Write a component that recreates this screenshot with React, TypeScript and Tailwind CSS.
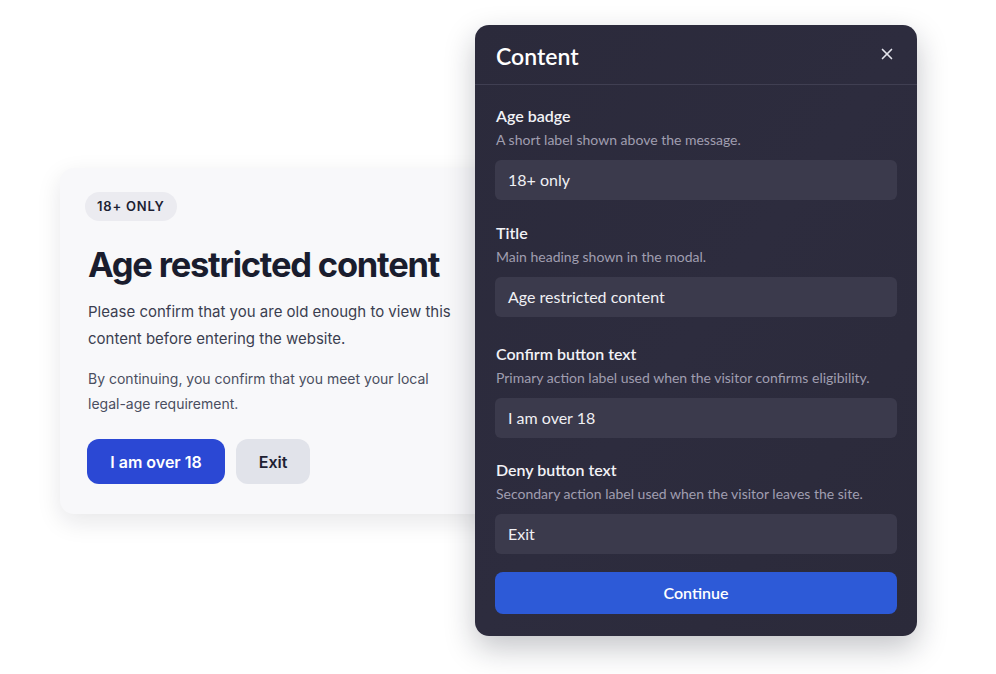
import { X } from 'lucide-react'

const fields = [
  { label: 'Age badge', hint: 'A short label shown above the message.', value: '18+ only', gap: 'mb-[23px]' },
  { label: 'Title', hint: 'Main heading shown in the modal.', value: 'Age restricted content', gap: 'mb-[27px]' },
  {
    label: 'Confirm button text',
    hint: 'Primary action label used when the visitor confirms eligibility.',
    value: 'I am over 18',
    gap: 'mb-[22px]',
  },
  {
    label: 'Deny button text',
    hint: 'Secondary action label used when the visitor leaves the site.',
    value: 'Exit',
    gap: 'mb-[18px]',
  },
]

function PreviewCard() {
  return (
    <div className="mt-[143px] w-[440px] shrink-0 rounded-[14px] bg-[#f8f8fa] pt-[24px] pb-[30px] pl-[28px] pr-[44px] shadow-[0_8px_24px_rgba(20,22,40,0.10)] font-['Inter',sans-serif]">
      <span className="-ml-[3px] inline-flex h-[29px] items-center rounded-full bg-[#ebebf0] px-[12px] text-[13px] font-semibold tracking-[0.06em] text-[#1c1f33]">
        18+ ONLY
      </span>
      <h1 className="mt-[22px] text-[34.5px] font-bold leading-[44px] tracking-[-0.035em] text-[#1a1d2e]">
        Age restricted content
      </h1>
      <p className="mt-[11px] text-[15px] leading-[27px] text-[#3b3e50]">
        Please confirm that you are old enough to view this content before entering the website.
      </p>
      <p className="mt-[14px] text-[14px] leading-[25px] text-[#4a4e60]">
        By continuing, you confirm that you meet your local legal-age requirement.
      </p>
      <div className="mt-[23px] -ml-[1px] flex gap-[11px]">
        <button className="h-[45px] w-[138px] rounded-[12px] bg-[#2b48d4] text-[16px] font-semibold text-white">
          I am over 18
        </button>
        <button className="h-[45px] w-[74px] rounded-[12px] bg-[#e1e3ea] text-[16px] font-semibold text-[#1e2133]">
          Exit
        </button>
      </div>
    </div>
  )
}

function ContentPanel() {
  return (
    <div className="relative z-10 -ml-[25px] w-[442px] shrink-0 rounded-[14px] bg-gradient-to-br from-[#2b2a3b] via-[#2d2c3e] to-[#2b2a3a] shadow-[0_12px_30px_rgba(20,22,40,0.25)] font-['Lato',sans-serif]">
      <div className="flex h-[60px] items-center justify-between border-b border-[#403f52] pl-[21px] pr-[21px] pt-[3px]">
        <h2 className="text-[23px] font-semibold text-white">Content</h2>
        <X className="-mt-[4px] h-[18px] w-[18px] text-[#e4e4ec]" strokeWidth={2.2} />
      </div>
      <div className="px-[20px] pt-[21px] pb-[22px]">
        {fields.map((f) => (
          <div key={f.label} className={f.gap}>
            <div className="pl-[1px] text-[16px] font-semibold leading-[20px] text-[#f2f2f6]">{f.label}</div>
            <div className="mt-[5px] pl-[1px] text-[14px] leading-[18px] text-[#a09eb0]">{f.hint}</div>
            <div className="mt-[11px] flex h-[40px] items-center rounded-[6px] bg-[#3b3a4c] px-[13px] text-[16px] text-[#f0f0f4]">
              {f.value}
            </div>
          </div>
        ))}
        <button className="h-[42px] w-full rounded-[8px] bg-[#2d5ad7] text-[16px] font-semibold text-white">
          Continue
        </button>
      </div>
    </div>
  )
}

export default function App() {
  return (
    <div className="h-[674px] w-[996px] overflow-hidden bg-white">
      <div className="flex items-start pl-[60px] pt-[25px]">
        <PreviewCard />
        <ContentPanel />
      </div>
    </div>
  )
}
